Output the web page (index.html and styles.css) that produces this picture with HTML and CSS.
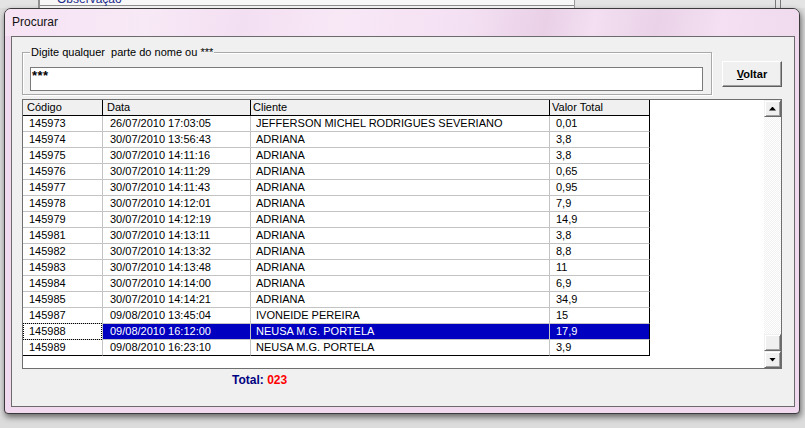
FILE: index.html
```html
<!DOCTYPE html>
<html lang="pt">
<head>
<meta charset="utf-8">
<title>Procurar</title>
<link rel="stylesheet" href="styles.css">
</head>
<body>
<div class="behind">
  <div class="b-left"></div>
  <div class="b-form"><span class="b-label">Observação</span></div>
  <div class="b-rest"><div class="b-lines"></div></div>
</div>
<div class="window">
  <div class="titlebar"><span class="title">Procurar</span></div>
  <div class="client">
    <div class="top-row">
      <div class="group">
        <span class="legend">Digite qualquer  parte do nome ou ***</span>
        <div class="edit">***</div>
      </div>
      <button class="btn"><u>V</u>oltar</button>
    </div>
    <div class="grid">
      <div class="table">
        <div class="row head">
          <div class="cell c1">Código</div>
          <div class="cell c2">Data</div>
          <div class="cell c3">Cliente</div>
          <div class="cell c4">Valor Total</div>
        </div>
        <div class="row"><div class="cell c1">145973</div><div class="cell c2">26/07/2010 17:03:05</div><div class="cell c3">JEFFERSON MICHEL RODRIGUES SEVERIANO</div><div class="cell c4">0,01</div></div>
        <div class="row"><div class="cell c1">145974</div><div class="cell c2">30/07/2010 13:56:43</div><div class="cell c3">ADRIANA</div><div class="cell c4">3,8</div></div>
        <div class="row"><div class="cell c1">145975</div><div class="cell c2">30/07/2010 14:11:16</div><div class="cell c3">ADRIANA</div><div class="cell c4">3,8</div></div>
        <div class="row"><div class="cell c1">145976</div><div class="cell c2">30/07/2010 14:11:29</div><div class="cell c3">ADRIANA</div><div class="cell c4">0,65</div></div>
        <div class="row"><div class="cell c1">145977</div><div class="cell c2">30/07/2010 14:11:43</div><div class="cell c3">ADRIANA</div><div class="cell c4">0,95</div></div>
        <div class="row"><div class="cell c1">145978</div><div class="cell c2">30/07/2010 14:12:01</div><div class="cell c3">ADRIANA</div><div class="cell c4">7,9</div></div>
        <div class="row"><div class="cell c1">145979</div><div class="cell c2">30/07/2010 14:12:19</div><div class="cell c3">ADRIANA</div><div class="cell c4">14,9</div></div>
        <div class="row"><div class="cell c1">145981</div><div class="cell c2">30/07/2010 14:13:11</div><div class="cell c3">ADRIANA</div><div class="cell c4">3,8</div></div>
        <div class="row"><div class="cell c1">145982</div><div class="cell c2">30/07/2010 14:13:32</div><div class="cell c3">ADRIANA</div><div class="cell c4">8,8</div></div>
        <div class="row"><div class="cell c1">145983</div><div class="cell c2">30/07/2010 14:13:48</div><div class="cell c3">ADRIANA</div><div class="cell c4">11</div></div>
        <div class="row"><div class="cell c1">145984</div><div class="cell c2">30/07/2010 14:14:00</div><div class="cell c3">ADRIANA</div><div class="cell c4">6,9</div></div>
        <div class="row"><div class="cell c1">145985</div><div class="cell c2">30/07/2010 14:14:21</div><div class="cell c3">ADRIANA</div><div class="cell c4">34,9</div></div>
        <div class="row"><div class="cell c1">145987</div><div class="cell c2">09/08/2010 13:45:04</div><div class="cell c3">IVONEIDE PEREIRA</div><div class="cell c4">15</div></div>
        <div class="row sel"><div class="cell c1">145988</div><div class="cell c2">09/08/2010 16:12:00</div><div class="cell c3">NEUSA M.G. PORTELA</div><div class="cell c4">17,9</div></div>
        <div class="row last"><div class="cell c1">145989</div><div class="cell c2">09/08/2010 16:23:10</div><div class="cell c3">NEUSA M.G. PORTELA</div><div class="cell c4">3,9</div></div>
      </div>
      <div class="blank"></div>
      <div class="vscroll">
        <div class="sb-btn"><span class="arrow up"></span></div>
        <div class="sb-track"></div>
        <div class="sb-btn"></div>
        <div class="sb-btn"><span class="arrow down"></span></div>
      </div>
    </div>
    <div class="total"><span class="t-label">Total:</span> <span class="t-val">023</span></div>
  </div>
</div>
</body>
</html>
```
FILE: styles.css
```css
* { box-sizing: border-box; }
html, body { margin: 0; padding: 0; }
body {
  width: 805px;
  height: 428px;
  overflow: hidden;
  background: #dcdcdc;
  font-family: "Liberation Sans", Arial, sans-serif;
  font-size: 11px;
  color: #000;
}

/* window behind */
.behind { display: flex; height: 8px; overflow: hidden; background: #e4e4e4; }
.b-left { width: 38px; flex: none; }
.b-form {
  width: 537px; flex: none;
  border-left: 2px solid #8f8f8f;
  border-right: 1px solid #9a9a9a;
  background: linear-gradient(#f7f7f7 0 5px, #8c8c8c 5px 6px, #f0f0f0 6px);
  overflow: hidden;
}
.b-label {
  display: block;
  margin: -8px 0 0 17px;
  font-size: 12px;
  line-height: 14px;
  color: #1b2b8c;
}
.b-rest { flex: 1; }
.b-lines {
  width: 6px; height: 8px; margin-left: 200px;
  border-left: 1px solid #777;
  border-right: 1px solid #777;
}

/* window */
.window {
  margin-left: 4px;
  width: 796px;
  height: 406px;
  border: 1px solid #3a3a3a;
  border-radius: 7px 7px 4px 4px;
  background: #f1daef;
  box-shadow: 1px 3px 6px rgba(0, 0, 0, 0.55);
  display: flex;
  flex-direction: column;
}
.titlebar {
  height: 27px;
  flex: none;
  padding: 0 0 1px 7px;
  display: flex;
  align-items: center;
  border-radius: 6px 6px 0 0;
  background: linear-gradient(100deg, #f6e3f4 0%, #f8e9f6 18%, #f3dff2 30%, #f8e8f6 42%, #f4e0f3 58%, #e9d0e7 68%, #f3dff1 74%, #ead2e8 82%, #f4e0f2 90%, #f0daee 100%);
}
.title { font-size: 12px; color: #111; }

.client {
  flex: 1;
  margin: 0 4px 6px 6px;
  background: #f0f0f0;
  border: 1px solid #6b6b6b;
  padding: 0 12px 0 10px;
}

.top-row { display: flex; align-items: flex-start; }
.group {
  position: relative;
  width: 690px;
  height: 43px;
  margin-top: 15px;
  border: 1px solid #a9a9a9;
  box-shadow: inset 1px 1px #fff, 1px 1px #fff;
  padding: 14px 8px 0 7px;
}
.legend {
  position: absolute;
  top: -7px;
  left: 7px;
  padding: 0 1px;
  background: #f0f0f0;
  line-height: 13px;
  white-space: pre;
}
.edit {
  width: 673px;
  height: 24px;
  background: #fff;
  border: 1px solid #7a7a7a;
  padding: 1px 0 0 1px;
  font-size: 13px;
  font-weight: bold;
  line-height: 14px;
  letter-spacing: 0.5px;
}
.btn {
  width: 60px;
  height: 26px;
  margin: 24px 0 0 10px;
  padding: 0;
  background: #f0f0f0;
  border: 1px solid;
  border-color: #fff #5e5e5e #5e5e5e #fff;
  box-shadow: inset -1px -1px #a0a0a0;
  font-family: "Liberation Sans", Arial, sans-serif;
  font-size: 11px;
  font-weight: bold;
  color: #000;
}

/* grid */
.grid {
  margin-top: 4px;
  width: 760px;
  height: 270px;
  border: 1px solid #6e6e6e;
  background: #fff;
  display: flex;
}
.table { width: 627px; flex: none; display: flex; flex-direction: column; }
.row { display: flex; height: 16px; }
.cell {
  height: 16px;
  line-height: 15px;
  border-right: 1px solid #c3c3c3;
  border-bottom: 1px solid #c3c3c3;
  white-space: nowrap;
  overflow: hidden;
}
.c1 { width: 80px; padding-left: 6px; }
.c2 { width: 148px; padding-left: 7px; }
.c3 { width: 299px; padding-left: 5px; }
.c4 { width: 100px; padding-left: 6px; border-right-color: #000; }

.head .cell { background: #f0f0f0; border-color: #000; }
.head .c1 { padding-left: 4px; }
.head .c2 { padding-left: 4px; }
.head .c3 { padding-left: 2px; }
.head .c4 { padding-left: 2px; }

.last .cell { border-bottom-color: #000; }

.sel .c2, .sel .c3, .sel .c4 { background: #0000c0; color: #fff; }
.sel .c1 { position: relative; overflow: visible; }
.sel .c1::after {
  content: "";
  position: absolute;
  top: -1px; bottom: -1px; left: 0; right: 0;
  border: 1px dotted #000;
}

.blank { flex: 1; }
.vscroll { width: 17px; flex: none; display: flex; flex-direction: column; }
.sb-btn {
  height: 17px;
  flex: none;
  background: #f0f0f0;
  border: 1px solid;
  border-color: #f0f0f0 #696969 #696969 #f0f0f0;
  box-shadow: inset 1px 1px #fff, inset -1px -1px #a0a0a0;
  display: flex;
  align-items: center;
  justify-content: center;
}
.sb-track {
  flex: 1;
  background: repeating-conic-gradient(#fff 0 25%, #f1f1f1 0 50%) 0 0 / 2px 2px;
}
.arrow { width: 7px; height: 4px; background: #000; }
.arrow.up { clip-path: polygon(50% 0, 100% 100%, 0 100%); }
.arrow.down { clip-path: polygon(0 0, 100% 0, 50% 100%); }

.total {
  margin: 4px 0 0 210px;
  font-size: 12px;
  font-weight: bold;
  line-height: 14px;
}
.t-label { color: #000080; }
.t-val { color: #ff0000; }
```
